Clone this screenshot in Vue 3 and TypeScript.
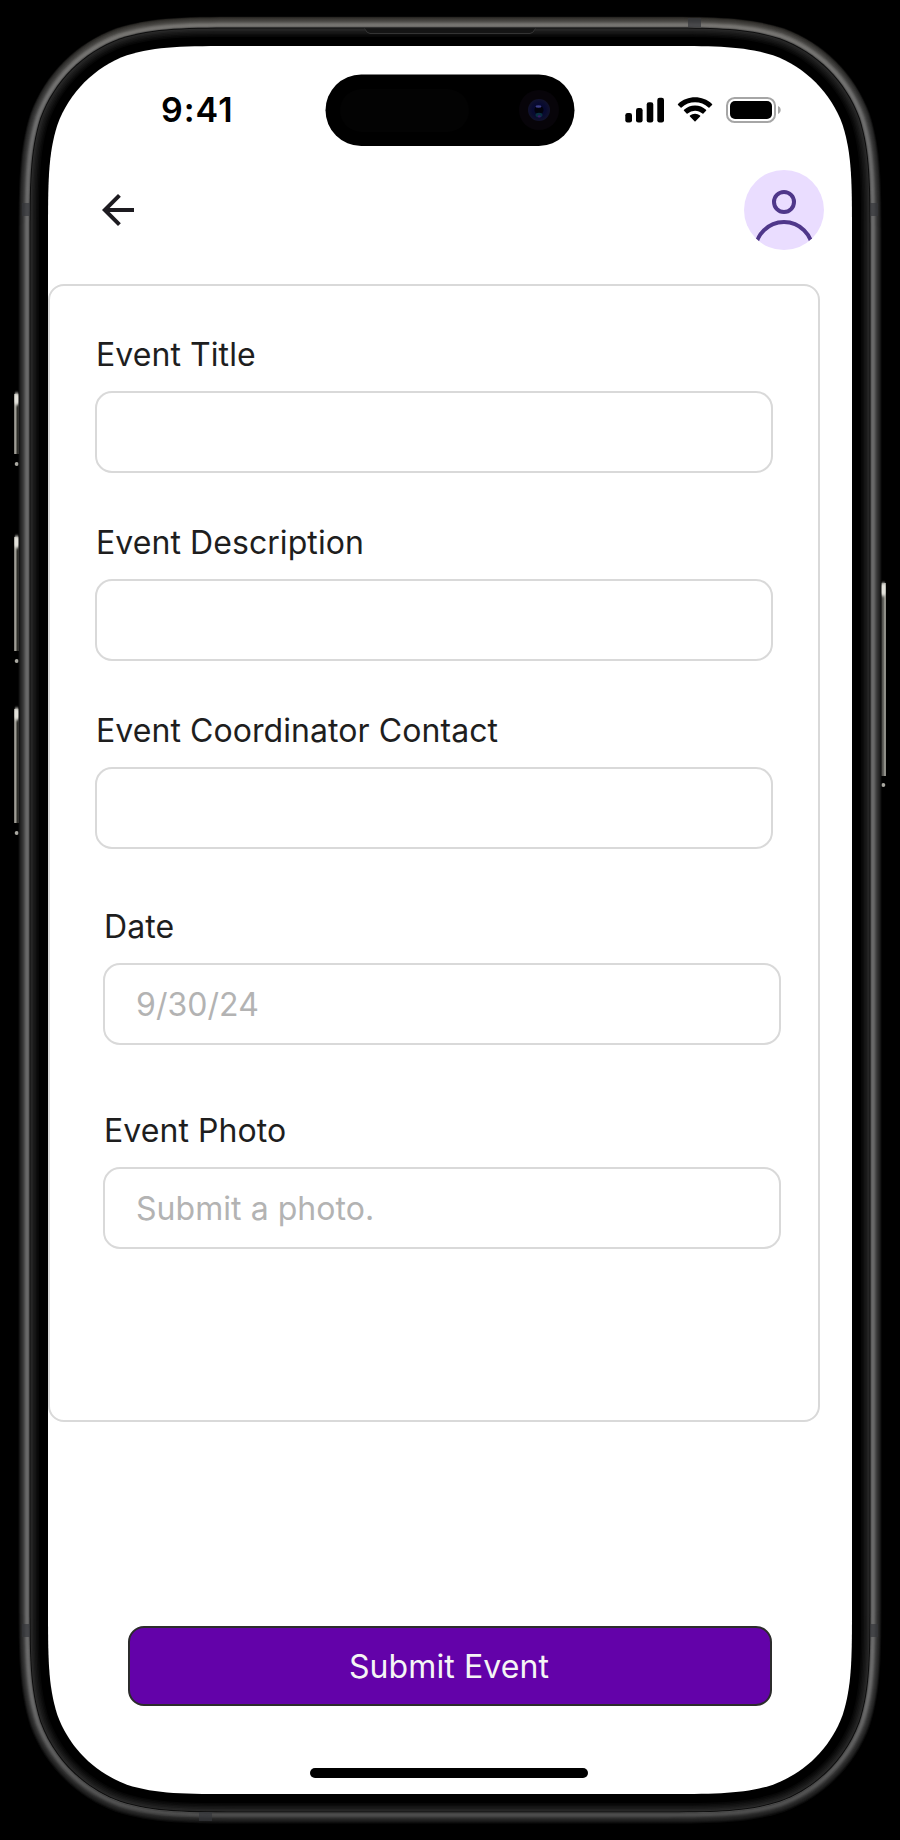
<script setup lang="ts">
import { reactive } from 'vue'

interface Field {
  id: string
  label: string
  placeholder: string
}

const mainFields: Field[] = [
  { id: 'title', label: 'Event Title', placeholder: '' },
  { id: 'description', label: 'Event Description', placeholder: '' },
  { id: 'contact', label: 'Event Coordinator Contact', placeholder: '' },
]

const extraFields: Field[] = [
  { id: 'date', label: 'Date', placeholder: '9/30/24' },
  { id: 'photo', label: 'Event Photo', placeholder: 'Submit a photo.' },
]

const values = reactive<Record<string, string>>({
  title: '',
  description: '',
  contact: '',
  date: '',
  photo: '',
})

const SCREEN = { x: 48, y: 46, w: 804, h: 1748, r: 125 }

// Continuous-corner rounded rectangle, grown outward from the screen by d.
function outline(d: number): string {
  const x0 = SCREEN.x - d
  const y0 = SCREEN.y - d
  const x1 = SCREEN.x + SCREEN.w + d
  const y1 = SCREEN.y + SCREEN.h + d
  const r = SCREEN.r + d
  const a = 1.528665 * r
  const b = 1.088493 * r
  const c = 0.868407 * r
  const e = 0.631494 * r
  const f = 0.074911 * r
  const g = 0.372824 * r
  const h = 0.16906 * r
  return [
    `M${x0 + a} ${y0}H${x1 - a}`,
    `C${x1 - b} ${y0} ${x1 - c} ${y0} ${x1 - e} ${y0 + f}`,
    `C${x1 - g} ${y0 + h} ${x1 - h} ${y0 + g} ${x1 - f} ${y0 + e}`,
    `C${x1} ${y0 + c} ${x1} ${y0 + b} ${x1} ${y0 + a}`,
    `V${y1 - a}`,
    `C${x1} ${y1 - b} ${x1} ${y1 - c} ${x1 - f} ${y1 - e}`,
    `C${x1 - h} ${y1 - g} ${x1 - g} ${y1 - h} ${x1 - e} ${y1 - f}`,
    `C${x1 - c} ${y1} ${x1 - b} ${y1} ${x1 - a} ${y1}`,
    `H${x0 + a}`,
    `C${x0 + b} ${y1} ${x0 + c} ${y1} ${x0 + e} ${y1 - f}`,
    `C${x0 + g} ${y1 - h} ${x0 + h} ${y1 - g} ${x0 + f} ${y1 - e}`,
    `C${x0} ${y1 - c} ${x0} ${y1 - b} ${x0} ${y1 - a}`,
    `V${y0 + a}`,
    `C${x0} ${y0 + b} ${x0} ${y0 + c} ${x0 + f} ${y0 + e}`,
    `C${x0 + h} ${y0 + g} ${x0 + g} ${y0 + h} ${x0 + e} ${y0 + f}`,
    `C${x0 + c} ${y0} ${x0 + b} ${y0} ${x0 + a} ${y0}Z`,
  ].join('')
}

// Brightness of the metal rim from its outer edge to the glass.
const rim: [number, string][] = [
  [29.5, '#0c0c0c'],
  [28.5, '#1c1c1c'],
  [27.5, '#272727'],
  [26.5, '#2e2e2e'],
  [25.5, '#383838'],
  [24.5, '#444444'],
  [23.5, '#565656'],
  [22.5, '#646464'],
  [21.5, '#6b6b6b'],
  [20.5, '#686868'],
  [19.5, '#555555'],
  [18.5, '#0e0e0e'],
  [17.5, '#2a2a2a'],
  [16.5, '#222222'],
  [15, '#1a1a1a'],
  [13.5, '#141414'],
  [12, '#0d0d0d'],
  [10.5, '#070707'],
  [9, '#000000'],
]

const sideKeys = [
  { x: 14, from: 388, to: 470 },
  { x: 14, from: 531, to: 667 },
  { x: 14, from: 703, to: 839 },
]
</script>

<template>
  <main class="stage">
    <svg class="device" width="900" height="1840" viewBox="0 0 900 1840" aria-hidden="true">
      <defs>
        <linearGradient id="rimShade" x1="0" y1="16" x2="0" y2="1824" gradientUnits="userSpaceOnUse">
          <stop offset="0" stop-color="#ffe9c0" stop-opacity="0.09" />
          <stop offset="0.08" stop-color="#ffffff" stop-opacity="0" />
          <stop offset="0.93" stop-color="#000000" stop-opacity="0" />
          <stop offset="1" stop-color="#000000" stop-opacity="0.3" />
        </linearGradient>
        <linearGradient id="keyLeft" x1="0" x2="1" y1="0" y2="0">
          <stop offset="0" stop-color="#77756f" />
          <stop offset="0.35" stop-color="#a5a39b" />
          <stop offset="0.65" stop-color="#24241f" />
          <stop offset="1" stop-color="#6a6964" />
        </linearGradient>
        <linearGradient id="keyRight" x1="0" x2="1" y1="0" y2="0">
          <stop offset="0" stop-color="#3b3b38" />
          <stop offset="0.5" stop-color="#64645f" />
          <stop offset="0.8" stop-color="#a5a59d" />
          <stop offset="1" stop-color="#77756f" />
        </linearGradient>
        <filter id="soft" x="-100%" y="-100%" width="300%" height="300%">
          <feGaussianBlur stdDeviation="0.7 1.8" />
        </filter>
        <radialGradient id="lens">
          <stop offset="0" stop-color="#060a2c" />
          <stop offset="0.6" stop-color="#080a30" />
          <stop offset="1" stop-color="#11122c" />
        </radialGradient>
      </defs>

      <g v-for="key in sideKeys" :key="key.from">
        <rect :x="key.x" :y="key.from + 6" width="5" :height="key.to - key.from - 22" fill="url(#keyLeft)" />
        <rect :x="key.x + 0.5" :y="key.from + 5" width="4.5" height="12" rx="2" fill="#e2e1da" filter="url(#soft)" />
        <circle :cx="key.x + 2.7" :cy="key.to - 6" r="2" fill="#aaa9a2" />
      </g>
      <rect x="881" y="583" width="5" height="193" fill="url(#keyRight)" />
      <rect x="881" y="583" width="4.5" height="13" rx="2" fill="#e2e1da" filter="url(#soft)" />
      <circle cx="883.3" cy="785" r="2" fill="#aaa9a2" />

      <path v-for="[d, color] in rim" :key="d" :d="outline(d)" :fill="color" />
      <path :d="outline(29) + outline(19)" fill="url(#rimShade)" fill-rule="evenodd" />

      <g fill="#34363a" fill-opacity="0.7">
        <rect x="22" y="203" width="8" height="13" />
        <rect x="870" y="203" width="8" height="13" />
        <rect x="22" y="1624" width="8" height="13" />
        <rect x="870" y="1624" width="8" height="13" />
        <rect x="688" y="18" width="13" height="9" />
        <rect x="199" y="1812" width="13" height="9" />
      </g>
      <path d="M364.500 28.500Q367 33.500 370 33.500H530Q533 33.500 535.500 28.500" fill="#151515" stroke="#343434" />
      <path :d="outline(0)" fill="#ffffff" />
    </svg>

    <section class="screen">
      <header class="status">
        <span class="time">9:41</span>
        <svg class="status-icons" width="160" height="30" viewBox="0 0 160 30" aria-label="Signal, Wi-Fi and battery">
          <rect x="5.300" y="18" width="6.700" height="9.600" rx="2.300" />
          <rect x="16" y="13" width="6.600" height="14.600" rx="2.300" />
          <rect x="26.700" y="7.300" width="6.600" height="20.300" rx="2.300" />
          <rect x="37.300" y="2.700" width="6.700" height="24.900" rx="2.300" />
          <g transform="translate(57.800 2.300) scale(2.010 2.030)">
            <path d="M8.571 2.466c2.487 0 4.879.922 6.682 2.576.136.128.353.126.486-.004l1.298-1.263a.34.34 0 0 0-.003-.494C12.303-1.094 4.839-1.094.108 3.281a.34.34 0 0 0-.003.494l1.298 1.263c.133.13.35.132.486.004 1.803-1.654 4.195-2.576 6.682-2.576z" />
            <path d="M8.568 6.575c1.366 0 2.684.513 3.697 1.438.137.132.353.129.487-.006l1.296-1.333a.37.37 0 0 0-.005-.526 8.055 8.055 0 0 0-10.944 0 .37.37 0 0 0-.005.526l1.296 1.333c.134.135.35.138.487.006a5.480 5.480 0 0 1 3.691-1.438z" />
            <path d="M11.092 9.484a.35.35 0 0 0-.013-.511 3.950 3.950 0 0 0-5.030 0 .35.35 0 0 0-.013.511l2.285 2.339a.343.343 0 0 0 .486 0z" />
          </g>
          <rect x="107" y="3" width="48" height="24" rx="7.600" fill="none" stroke="#a6a6a6" stroke-width="2" />
          <rect x="110" y="6" width="42" height="18" rx="5" />
          <path d="M158 11v8c1.700-.7 2.700-2.300 2.700-4s-1-3.300-2.700-4z" fill="#a6a6a6" />
        </svg>
      </header>

      <nav class="toolbar">
        <button class="back" type="button" aria-label="Back">
          <svg width="48" height="48" viewBox="0 0 24 24">
            <path d="M7.825 13L13.425 18.600L12 20L4 12L12 4L13.425 5.400L7.825 11H20V13H7.825Z" fill="#1d1b20" />
          </svg>
        </button>
        <button class="avatar" type="button" aria-label="Profile">
          <svg width="80" height="80" viewBox="0 0 80 80" fill="none" stroke="#4f378a" stroke-width="4">
            <circle cx="40" cy="32" r="10" />
            <circle cx="40" cy="80.500" r="28.500" />
          </svg>
        </button>
      </nav>

      <form id="event-form" class="panel" @submit.prevent>
        <div class="group">
          <label v-for="field in mainFields" :key="field.id" class="field">
            <span class="label">{{ field.label }}</span>
            <input v-model="values[field.id]" class="input" type="text" :placeholder="field.placeholder" />
          </label>
        </div>
        <div class="group group-extra">
          <label v-for="field in extraFields" :key="field.id" class="field">
            <span class="label">{{ field.label }}</span>
            <input v-model="values[field.id]" class="input" type="text" :placeholder="field.placeholder" />
          </label>
        </div>
      </form>

      <button class="submit" type="submit" form="event-form">Submit Event</button>
      <div class="home-bar"></div>

      <svg class="island" width="250" height="72" viewBox="0 0 250 72" aria-hidden="true">
        <rect x="0.500" y="0.500" width="249" height="71.500" rx="35.700" fill="#000000" />
        <rect x="15" y="15" width="129" height="43" rx="21.500" fill="#030303" />
        <circle cx="214" cy="36" r="20" fill="#070409" />
        <circle cx="214" cy="36" r="11" fill="url(#lens)" />
        <circle cx="214" cy="36" r="4.500" fill="#02020c" />
        <ellipse cx="213.500" cy="32.500" rx="3" ry="1.300" fill="#3c3e88" />
        <ellipse cx="214" cy="41" rx="3.500" ry="2.300" fill="#083040" />
        <ellipse cx="214.300" cy="42.400" rx="1.600" ry="1.100" fill="#3a1860" />
      </svg>
    </section>
  </main>
</template>

<style>
body {
  margin: 0;
  background: #000000;
}
</style>

<style scoped>
.stage {
  display: grid;
  width: 900px;
  height: 1840px;
  overflow: hidden;
  background: #000000;
  font-family: Inter, "Liberation Sans", sans-serif;
}

.device {
  grid-area: 1 / 1;
  display: block;
}

.screen {
  grid-area: 1 / 1;
  position: relative;
  display: flex;
  flex-direction: column;
  box-sizing: border-box;
  width: 804px;
  height: 1748px;
  margin: 46px 0 0 48px;
}

button {
  padding: 0;
  border: 0;
  background: none;
  font: inherit;
}

button svg {
  display: block;
}

.status {
  display: flex;
  align-items: center;
  justify-content: space-between;
  height: 128px;
  box-sizing: border-box;
  padding: 0 70px 0 113px;
}

.time {
  font-size: 34px;
  font-weight: 600;
  line-height: 40px;
  letter-spacing: 1px;
}

.status-icons {
  display: block;
  overflow: visible;
  margin-right: 2px;
}

.toolbar {
  display: flex;
  align-items: center;
  justify-content: space-between;
  height: 80px;
  margin-top: -4px;
  padding: 0 28px 0 46px;
}

.avatar {
  width: 80px;
  height: 80px;
  border-radius: 50%;
  overflow: hidden;
  background: #eaddff;
}

.panel {
  box-sizing: border-box;
  width: 772px;
  height: 1138px;
  margin-top: 34px;
  padding: 46px 45px 0;
  border: 2px solid #d9d9d9;
  border-radius: 16px;
}

.group {
  display: flex;
  flex-direction: column;
  gap: 47px;
}

.group-extra {
  gap: 63px;
  margin: 55px 0 0 8px;
}

.field {
  display: flex;
  flex-direction: column;
  gap: 14px;
  width: 678px;
}

.label {
  height: 45px;
  padding-left: 1px;
  color: #1e1e1e;
  font-size: 32px;
  line-height: 45px;
  letter-spacing: 0.07px;
}

.input {
  box-sizing: border-box;
  width: 678px;
  height: 82px;
  padding: 0 31px;
  border: 2px solid #d9d9d9;
  border-radius: 17px;
  outline: none;
  background: #ffffff;
  color: #1e1e1e;
  font-family: inherit;
  font-size: 32px;
  line-height: 40px;
  letter-spacing: 0.05px;
}

.input::placeholder {
  color: #b3b3b3;
  opacity: 1;
}

.submit {
  box-sizing: border-box;
  width: 644px;
  height: 80px;
  margin: 204px 0 0 80px;
  padding: 2px 2px 0 0;
  border: 2px solid #2c2c2c;
  border-radius: 16px;
  background: #6302a9;
  color: #f5f5f5;
  font-size: 32px;
  line-height: 32px;
  letter-spacing: 0.1px;
}

.home-bar {
  width: 278px;
  height: 10px;
  margin: 62px 0 0 262px;
  border-radius: 5px;
  background: #000000;
}

.island {
  position: absolute;
  top: 28px;
  left: 277px;
}
</style>
